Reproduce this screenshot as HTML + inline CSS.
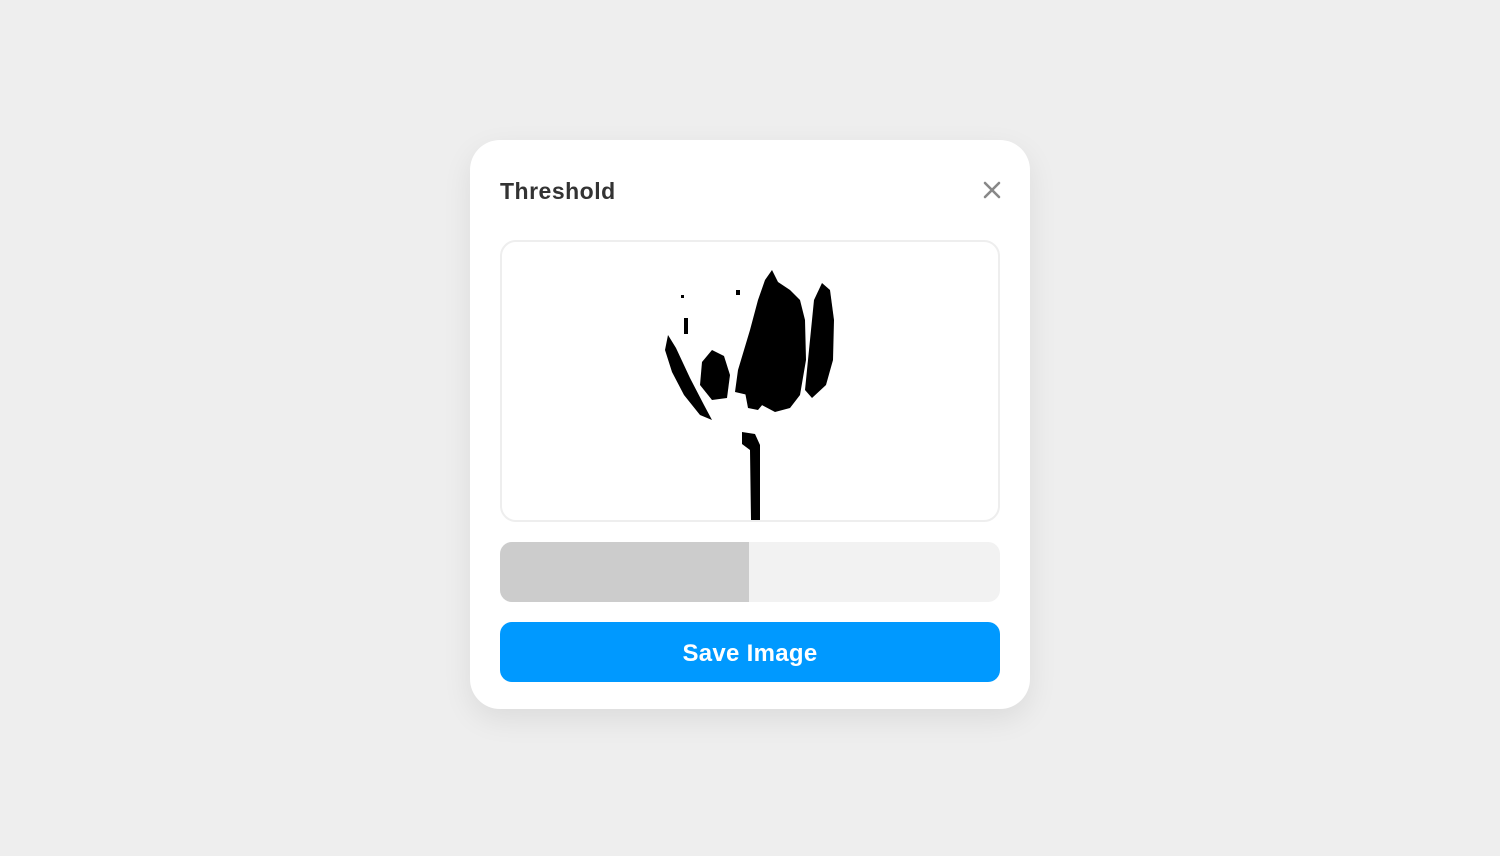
<!DOCTYPE html>
<html><head><style>
body{margin:0;width:1500px;height:856px;background:#eeeeee;font-family:"Liberation Sans",sans-serif;position:relative;overflow:hidden}
.card{position:absolute;left:470px;top:140px;width:560px;height:569px;background:#fff;border-radius:30px;box-shadow:0 10px 30px rgba(0,0,0,0.08)}
.title{position:absolute;left:30px;top:38px;font-size:23px;font-weight:bold;color:#333;letter-spacing:0.5px}
.close{position:absolute;left:512px;top:41px}
.img{position:absolute;left:30px;top:100px;width:496px;height:278px;border:2px solid #eee;border-radius:16px;overflow:hidden}
.slider{position:absolute;left:30px;top:402px;width:500px;height:60px;background:#f2f2f2;border-radius:12px;overflow:hidden}
.slider div{width:249px;height:60px;background:#cccccc}
.btn{position:absolute;left:30px;top:482px;width:500px;height:60px;background:#0099ff;border-radius:12px;color:#fff;font-size:24px;font-weight:bold;text-align:center;line-height:63px;letter-spacing:0.3px}
</style></head><body>
<div class="card">
<div class="title">Threshold</div>
<svg class="close" width="20" height="18" viewBox="0 0 20 18"><path d="M3 2L17 16M17 2L3 16" stroke="#888" stroke-width="2.6" stroke-linecap="round"/></svg>
<div class="img">
<svg width="496" height="278" viewBox="502 242 496 278">
<g fill="#000">
<path d="M772 270L778 282L790 290L800 300L805 320L806 360L800 395L790 408L775 412L760 404L748 395L735 392L738 370L750 330L758 300L765 280Z"/>
<path d="M822 283L830 290L834 320L833 360L826 385L812 398L805 390L810 340L814 300Z"/>
<path d="M712 350L724 356L730 375L727 398L712 400L700 385L702 362Z"/>
<path d="M668 335L676 348L690 378L704 405L712 420L700 415L684 395L672 372L665 350Z"/>
<path d="M745 392L760 390L768 398L758 410L748 408Z"/>
<path d="M742 432L755 434L760 445L760 520L751 520L750 450L742 444Z"/>
<rect x="684" y="318" width="4" height="16"/>
<rect x="681" y="295" width="3" height="3"/>
<rect x="736" y="290" width="4" height="5"/>
</g>
</svg>
</div>
<div class="slider"><div></div></div>
<div class="btn">Save Image</div>
</div>
</body></html>
